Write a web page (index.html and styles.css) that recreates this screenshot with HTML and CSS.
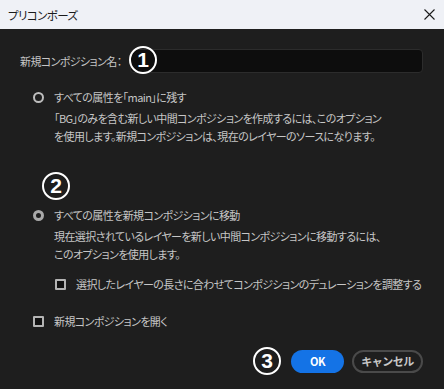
FILE: index.html
```html
<!DOCTYPE html>
<html lang="ja">
<head>
  <meta charset="UTF-8"/>
  <meta name="viewport" content="width=device-width, initial-scale=1.0"/>
  <title>プリコンポーズ</title>
  <link rel="stylesheet" href="styles.css">
</head>
<body>
  <div class="dialog">
    <div class="titlebar">
      <span class="title">プリコンポーズ</span>
      <svg class="close" width="11" height="11" viewBox="0 0 11 11">
        <path d="M0.5 0.5 L10.5 10.5 M10.5 0.5 L0.5 10.5" stroke="#1a1a1a" stroke-width="1.1" fill="none"/>
      </svg>
    </div>

    <div class="content">
      <div class="name-row">
        <label for="compName">新規コンポジション名：</label>
        <div class="input-wrap">
          <input type="text" id="compName"/>
          <span class="mark mark-1">1</span>
        </div>
      </div>

      <div class="option first">
        <div class="opt-row">
          <span class="radio"></span>
          <span>すべての属性を「main」に残す</span>
        </div>
        <p class="desc">「BG」のみを含む新しい中間コンポジションを作成するには、このオプション<br>を使用します。新規コンポジションは、現在のレイヤーのソースになります。</p>
      </div>

      <div class="option second">
        <span class="mark mark-2">2</span>
        <div class="opt-row">
          <span class="radio checked"></span>
          <span>すべての属性を新規コンポジションに移動</span>
        </div>
        <p class="desc">現在選択されているレイヤーを新しい中間コンポジションに移動するには、<br>このオプションを使用します。</p>
        <div class="opt-row sub">
          <span class="check"></span>
          <span>選択したレイヤーの長さに合わせてコンポジションのデュレーションを調整する</span>
        </div>
      </div>

      <div class="opt-row open">
        <span class="check"></span>
        <span>新規コンポジションを開く</span>
      </div>

      <div class="actions">
        <span class="mark mark-3">3</span>
        <button class="btn ok">OK</button>
        <button class="btn cancel">キャンセル</button>
      </div>
    </div>
  </div>
</body>
</html>
```

FILE: styles.css
```css
body { margin:0; padding:0; background:#1e1e1e; font-family:"Noto Sans CJK JP", "Noto Sans", sans-serif; font-feature-settings:"palt"; }
.dialog { width:444px; height:389px; background:#1e1e1e; color:#c6c6c6; font-size:11px; letter-spacing:-0.6px; white-space:nowrap; overflow:hidden; }

.titlebar { height:29px; background:#eff1f6; display:flex; align-items:center; justify-content:space-between; padding:0 9px 0 8px; }
.title { color:#1a1a1a; font-size:11.5px; letter-spacing:-0.6px; }

.content { position:relative; padding:20px 21px 0 20px; }

.name-row { display:flex; align-items:center; height:24px; }
.name-row label { width:110px; }
.input-wrap { position:relative; flex:1; }
.input-wrap input { display:block; box-sizing:border-box; width:100%; height:24px; background:#0d0d0d; border:1px solid #2c2c2c; border-radius:4px; color:#ddd; padding:0 8px; outline:none; }

.mark { position:absolute; box-sizing:border-box; width:28px; height:28px; border:2px solid #fff; border-radius:50%; color:#fff; letter-spacing:0;
  font-family:"Liberation Sans", sans-serif; font-weight:bold; font-size:21px; line-height:24px; text-align:center; }
.mark-1 { left:-1px; top:-3px; }
.mark-2 { left:22px; top:-35px; }
.mark-3 { position:static; margin-right:2px; }

.option { position:relative; padding-left:13px; }
.option.first { margin-top:16px; }
.option.second { margin-top:62px; }

.opt-row { display:flex; align-items:center; height:16px; line-height:16px; gap:10px; }
.radio { box-sizing:border-box; width:11px; height:11px; border:2px solid #bdbdbd; border-radius:50%; }
.radio.checked { border:3.5px solid #a9a9a9; background:#1e1e1e; }
.check { box-sizing:border-box; width:11px; height:11px; border:2px solid #b4b4b4; border-radius:1px; background:#111; }

.desc { margin:4px 0 0 21px; line-height:18px; }
.opt-row.sub { margin:13px 0 0 22px; }
.opt-row.open { margin:21px 0 0 13px; }

.actions { display:flex; justify-content:flex-end; align-items:center; gap:8px; margin-top:18px; }
.btn { height:23px; border-radius:12px; font-family:"Noto Sans CJK JP", sans-serif; font-weight:bold; font-size:11px; letter-spacing:-0.5px; cursor:pointer; padding:0; }
.ok { width:53px; background:#1473e6; color:#fff; border:none; }
.cancel { width:71px; background:transparent; color:#c8c8c8; border:2px solid #4a4a4a; }
```
